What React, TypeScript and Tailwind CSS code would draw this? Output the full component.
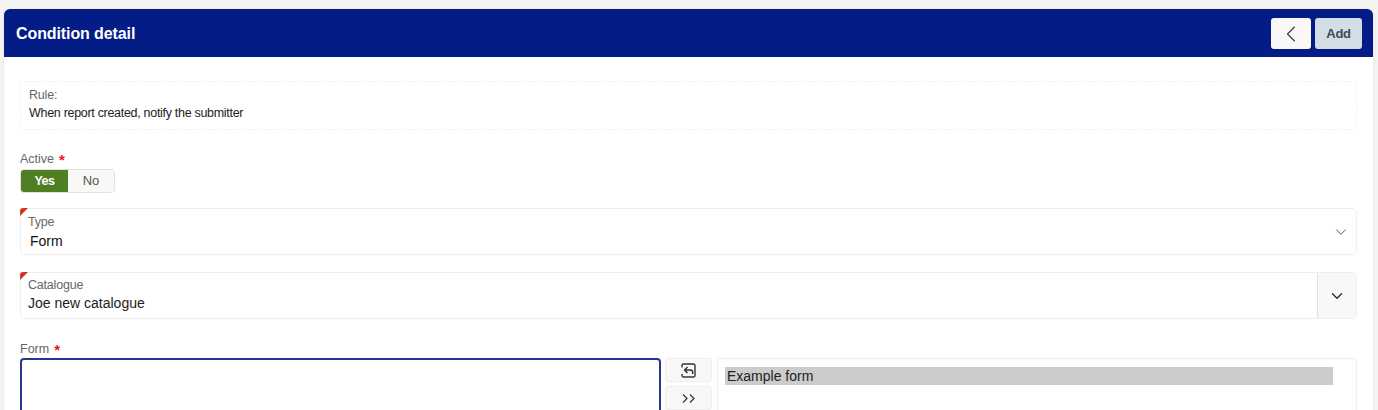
import { ChevronDown, ChevronLeft } from "lucide-react";

const fuente = "font-['Liberation_Sans',Arial,sans-serif]";

function Requerido() {
  return <span className="ml-[5px] text-[15px] font-bold leading-none text-[#f01818]">*</span>;
}

function MarcaError() {
  return (
    <span className="absolute -left-px -top-px h-[8px] w-[8px] rounded-tl-[3px] bg-[#d4371f] [clip-path:polygon(0_0,100%_0,0_100%)]" />
  );
}

function IconoVolver() {
  return (
    <svg width="15" height="15" viewBox="0 0 15 15" fill="none" stroke="#2f343a" strokeWidth="1.4">
      <path d="M1 4.5V2.5A1.5 1.5 0 0 1 2.5 1h10A1.5 1.5 0 0 1 14 2.5v10a1.5 1.5 0 0 1-1.5 1.5h-10A1.5 1.5 0 0 1 1 12.5V11" />
      <path d="M6.5 4 3.5 7l3 3M3.5 7h6a2.2 2.2 0 0 1 2.2 2.2V11" />
    </svg>
  );
}

function IconoDoble() {
  return (
    <svg width="13" height="9" viewBox="0 0 13 9" fill="none" stroke="#2f343a" strokeWidth="1.2">
      <path d="M1 .5 5 4.5 1 8.5M8 .5l4 4-4 4" />
    </svg>
  );
}

export default function App() {
  return (
    <div className={`${fuente} h-[410px] w-[1378px] overflow-hidden bg-[#f4f3f1] pl-[4px] pr-[5px] pt-[9px]`}>
      <div className="h-[401px] overflow-hidden rounded-t-[6px] bg-white shadow-[0_0_1px_#b5b5b5]">
        <header className="flex h-[48px] items-start justify-between bg-[#041c85] pl-[12px] pr-[11px] pt-[9px]">
          <h1 className="text-[16px] font-bold leading-[32px] tracking-[-0.1px] text-white">Condition detail</h1>
          <div className="flex gap-[4px]">
            <button className="flex h-[31px] w-[40px] items-center justify-center rounded-[3px] bg-[#f9f8f6] text-[#3a3f45]">
              <ChevronLeft size={28} strokeWidth={1} />
            </button>
            <button className="h-[31px] w-[47px] rounded-[3px] bg-[#d2dde5] text-[13px] font-bold tracking-[-0.3px] text-[#3d4a55]">
              Add
            </button>
          </div>
        </header>

        <div className="px-[16px] pt-[24px]">
          <section className="h-[49px] rounded-[3px] border border-dashed border-[#f0f0f0] pl-[8px] pr-[8px] pt-[5px]">
            <div className="text-[12.5px] leading-[16px] tracking-[-0.2px] text-[#666666]">Rule:</div>
            <div className="mt-[2px] text-[12.5px] leading-[17px] tracking-[-0.3px] text-[#222222]">
              When report created, notify the submitter
            </div>
          </section>

          <div className="mt-[21px] flex h-[17px] items-center text-[12.5px] text-[#666666]">
            Active
            <Requerido />
          </div>
          <div className="mt-px flex h-[24px] w-[95px] overflow-hidden rounded-[4px] border border-[#e2e1de] text-[13px]">
            <span className="flex w-[47px] items-center justify-center bg-[#4f7f24] text-[12.5px] font-bold tracking-[-0.5px] text-white">
              Yes
            </span>
            <span className="flex flex-1 items-center justify-center bg-[#f9f8f6] text-[#555555]">No</span>
          </div>

          <div className="relative mt-[15px] flex h-[47px] items-center justify-between rounded-[5px] border border-[#eeeeee] pl-[7px] pr-[6px]">
            <MarcaError />
            <div>
              <div className="text-[12.5px] leading-[16px] tracking-[-0.2px] text-[#666666]">Type</div>
              <div className="mt-[2px] pl-[2px] text-[14px] leading-[18px] text-[#111111]">Form</div>
            </div>
            <ChevronDown size={18} strokeWidth={1.3} className="text-[#555555]" />
          </div>

          <div className="relative mt-[17px] flex h-[47px] rounded-[5px] border border-[#eeeeee]">
            <MarcaError />
            <div className="flex-1 pl-[7px] pt-[4px]">
              <div className="text-[12.5px] leading-[16px] tracking-[-0.2px] text-[#666666]">Catalogue</div>
              <div className="mt-px text-[14px] leading-[18px] text-[#222222]">Joe new catalogue</div>
            </div>
            <div className="flex w-[39px] items-center justify-center rounded-r-[5px] border-l border-[#e2e1de] bg-[#f9f8f6]">
              <ChevronDown size={18} strokeWidth={1.6} className="text-[#222222]" />
            </div>
          </div>

          <div className="mt-[22px] flex h-[17px] items-center text-[12.5px] text-[#666666]">
            Form
            <Requerido />
          </div>
          <div className="flex gap-[4px]">
            <div className="h-[80px] w-[641px] rounded-[4px] border-2 border-[#2a3590] bg-white" />
            <div className="flex w-[47px] flex-col gap-[4px]">
              <button className="flex h-[24px] items-center justify-center rounded-[3px] border border-[#eeeeee] bg-[#f9f8f6]">
                <IconoVolver />
              </button>
              <button className="flex h-[24px] items-center justify-center rounded-[3px] border border-[#eeeeee] bg-[#f9f8f6]">
                <IconoDoble />
              </button>
            </div>
            <div className="ml-px h-[80px] flex-1 rounded-[4px] border border-[#eeeeee] pl-[7px] pt-[8px]">
              <div className="h-[18px] w-[608px] bg-[#cccccc] pl-[2px] text-[14px] leading-[18px] text-[#222222]">
                Example form
              </div>
            </div>
          </div>
        </div>
      </div>
    </div>
  );
}
